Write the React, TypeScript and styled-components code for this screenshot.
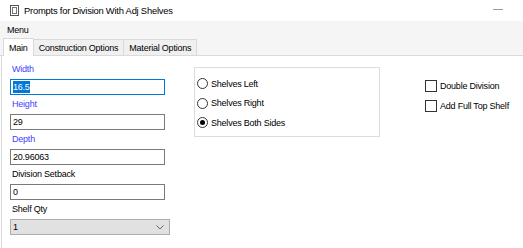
import React, { useState } from "react";
import styled, { createGlobalStyle } from "styled-components";

const Global = createGlobalStyle`
  html, body { margin: 0; padding: 0; background: #ffffff; }
  body {
    font-family: "Liberation Sans", Arial, sans-serif;
    font-size: 9px;
    letter-spacing: -0.22px;
    color: #000;
  }
`;

const Window = styled.div`
  width: 523px;
  height: 248px;
  display: flex;
  flex-direction: column;
  background: #ffffff;
  overflow: hidden;
`;

const TitleBar = styled.div`
  height: 21px;
  display: flex;
  align-items: center;
  padding-left: 10px;
  gap: 5px;
  font-size: 9.4px;
  color: #000;
`;

const TitleText = styled.span`
  flex: 1;
`;

const MinDash = styled.div`
  width: 10px;
  height: 1px;
  background: #9a9a9a;
  margin: -2px 20px 0 0;
`;

const MenuBar = styled.div`
  height: 17px;
  display: flex;
  align-items: center;
  padding-left: 7px;
  background: #f5f5f5;
`;

const TabStrip = styled.div`
  height: 17px;
  display: flex;
  align-items: flex-end;
  padding-left: 3px;
  background: #f5f5f5;
  border-bottom: 1px solid #dadada;
`;

const Tab = styled.div<{ $active?: boolean }>`
  height: ${(p) => (p.$active ? 17 : 15)}px;
  padding: 0 5px;
  display: flex;
  align-items: center;
  background: ${(p) => (p.$active ? "#ffffff" : "#f0f0f0")};
  border: 1px solid #d9d9d9;
  border-bottom: none;
  margin-right: -1px;
  margin-bottom: ${(p) => (p.$active ? -1 : 0)}px;
  position: relative;
  z-index: ${(p) => (p.$active ? 1 : 0)};
`;

const Panel = styled.div`
  flex: 1;
  display: flex;
  border-left: 1px solid #dadada;
  margin-left: 1px;
`;

const LeftCol = styled.div`
  width: 184px;
  padding: 7px 0 0 8px;
  display: flex;
  flex-direction: column;
`;

const Label = styled.div<{ $blue?: boolean }>`
  height: 13px;
  line-height: 13px;
  padding-left: 2px;
  color: ${(p) => (p.$blue ? "#3f3fff" : "#000")};
  margin-bottom: 3px;
`;

const TextBox = styled.div<{ $focus?: boolean }>`
  width: 151px;
  height: 14px;
  border: 1px solid ${(p) => (p.$focus ? "#0078d7" : "#7a7a7a")};
  display: flex;
  align-items: center;
  padding-left: 2px;
  margin-bottom: 3px;
`;

const Selected = styled.span`
  background: #0078d7;
  color: #fff;
  line-height: 12px;
`;

const Combo = styled.div`
  width: 151px;
  height: 14px;
  border: 1px solid #adadad;
  background: #e1e1e1;
  display: flex;
  align-items: center;
  justify-content: space-between;
  padding: 0 5px 0 2px;
  box-sizing: content-box;
`;

const GroupBox = styled.div`
  margin-top: 11px;
  width: 186px;
  height: 70px;
  border: 1px solid #dcdcdc;
  display: flex;
  flex-direction: column;
  padding: 9px 0 0 2px;
  box-sizing: border-box;
  gap: 6.5px;
`;

const OptionRow = styled.div`
  display: flex;
  align-items: center;
  gap: 3px;
  height: 13px;
`;

const Radio = styled.div<{ $on?: boolean }>`
  width: 11px;
  height: 11px;
  border-radius: 50%;
  border: 1px solid #333;
  box-sizing: border-box;
  display: flex;
  align-items: center;
  justify-content: center;
  &::after {
    content: "";
    display: ${(p) => (p.$on ? "block" : "none")};
    width: 5px;
    height: 5px;
    border-radius: 50%;
    background: #000;
  }
`;

const RightCol = styled.div`
  margin-left: 45px;
  padding-top: 23px;
  display: flex;
  flex-direction: column;
  gap: 7px;
`;

const Check = styled.div`
  width: 12px;
  height: 12px;
  border: 1px solid #333;
  box-sizing: border-box;
`;

export default function App() {
  const [side, setSide] = useState(2);
  const sides = ["Shelves Left", "Shelves Right", "Shelves Both Sides"];
  return (
    <>
      <Global />
      <Window>
        <TitleBar>
          <svg width="9" height="11" viewBox="0 0 9 11">
            <rect x="0.5" y="0.5" width="8" height="10" fill="#fff" stroke="#555" />
            <rect x="2.5" y="2.5" width="4" height="6" fill="none" stroke="#777" />
          </svg>
          <TitleText>Prompts for Division With Adj Shelves</TitleText>
          <MinDash />
        </TitleBar>
        <MenuBar>Menu</MenuBar>
        <TabStrip>
          <Tab $active>Main</Tab>
          <Tab>Construction Options</Tab>
          <Tab>Material Options</Tab>
        </TabStrip>
        <Panel>
          <LeftCol>
            <Label $blue>Width</Label>
            <TextBox $focus>
              <Selected>16.5</Selected>
            </TextBox>
            <Label $blue>Height</Label>
            <TextBox>29</TextBox>
            <Label $blue>Depth</Label>
            <TextBox>20.96063</TextBox>
            <Label>Division Setback</Label>
            <TextBox>0</TextBox>
            <Label>Shelf Qty</Label>
            <Combo>
              <span>1</span>
              <svg width="8" height="5" viewBox="0 0 8 5">
                <path d="M0.5 0.5 L4 4 L7.5 0.5" fill="none" stroke="#666" />
              </svg>
            </Combo>
          </LeftCol>
          <GroupBox>
            {sides.map((s, i) => (
              <OptionRow key={s} onClick={() => setSide(i)}>
                <Radio $on={side === i} />
                <span>{s}</span>
              </OptionRow>
            ))}
          </GroupBox>
          <RightCol>
            <OptionRow>
              <Check />
              <span>Double Division</span>
            </OptionRow>
            <OptionRow>
              <Check />
              <span>Add Full Top Shelf</span>
            </OptionRow>
          </RightCol>
        </Panel>
      </Window>
    </>
  );
}
